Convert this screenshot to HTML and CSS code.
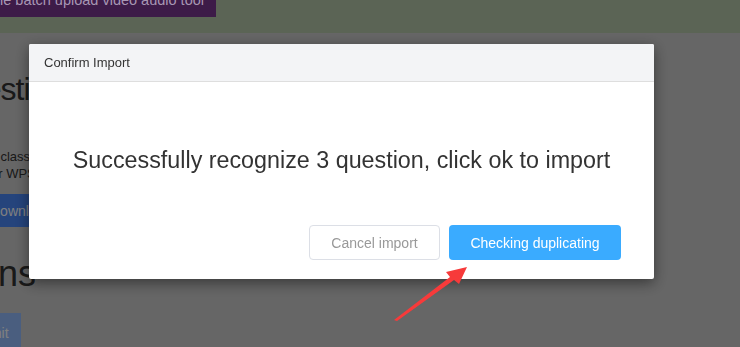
FILE: index.html
```html
<!DOCTYPE html>
<html lang="en">
<head>
  <meta charset="UTF-8">
  <title>Import Questions</title>
  <link rel="stylesheet" href="styles.css">
</head>
<body>

  <div class="topbar">
    <div class="tool-btn"><span>Simple batch upload video audio tool</span></div>
  </div>

  <div class="content">
    <h1 class="title">Questions</h1>
    <p class="hint">
      <span class="line1">Use the classic template, edit it in Word</span>
      <span class="line2">or WPS and then upload the file</span>
    </p>
    <button class="btn-download">Download template</button>
    <h2 class="subtitle">Questions</h2>
    <button class="btn-submit">Submit</button>
  </div>

  <!-- Modal -->
  <div class="overlay">
    <div class="modal">
      <div class="modal-header">Confirm Import</div>
      <div class="modal-body">Successfully recognize 3 question, click ok to import</div>
      <div class="modal-footer">
        <button class="btn-cancel">Cancel import</button>
        <button class="btn-primary">Checking duplicating</button>
      </div>
    </div>
  </div>

  <!-- annotation arrow -->
  <svg class="arrow" width="740" height="347" viewBox="0 0 740 347">
    <polygon points="394,320 450,277 446,272 467,267 459,284 454,280 397,321" fill="#f73a3a"/>
  </svg>

</body>
</html>
```

FILE: styles.css
```css
html, body {
  margin: 0;
  padding: 0;
  height: 100%;
  overflow: hidden;
  font-family: 'Liberation Sans', Arial, sans-serif;
  background: #cccccc;
}

.topbar {
  height: 33px;
  background: #5b6455;
}

.tool-btn {
  width: 216px;
  height: 17px;
  background: #3d1b48;
  color: #a897b4;
  font-family: 'Liberation Sans', Arial, sans-serif;
  font-size: 14.5px;
  line-height: 16px;
  overflow: hidden;
  white-space: nowrap;
}

.tool-btn span {
  display: block;
  margin-top: -8px;
  margin-left: -33px;
}

/* page behind the dialog */
.content {
  color: #333;
  white-space: nowrap;
}

.title {
  margin: 36px 0 0 -57px;
  font-size: 32px;
  font-weight: normal;
  line-height: 40px;
  letter-spacing: -1px;
}

.hint {
  margin: 39px 0 0 0;
  font-size: 13px;
  line-height: 17px;
}

.hint span {
  display: block;
}

.hint .line1 {
  margin-left: -48px;
}

.hint .line2 {
  margin-left: -9px;
}

.btn-download,
.btn-submit {
  display: block;
  height: 33px;
  padding: 0 12px;
  border: none;
  background: #4a88f8;
  color: #fff;
  font-family: inherit;
  font-size: 14px;
}

.btn-download {
  margin: 12px 0 0 -22px;
}

.subtitle {
  margin: 27px 0 0 -126px;
  font-size: 36px;
  font-weight: normal;
  line-height: 40px;
}

.btn-submit {
  margin: 19px 0 0 -47px;
  height: 40px;
  background: #94bcff;
}

/* dialog */
.overlay {
  position: fixed;
  left: 0;
  right: 0;
  top: 33px;
  bottom: 0;
  background: rgba(0, 0, 0, 0.5);
  padding: 11px 0 0 29px;
}

.modal {
  width: 625px;
  background: #fff;
  border-radius: 2px;
  box-shadow: 0 4px 14px rgba(0, 0, 0, 0.45);
}

.modal-header {
  height: 37px;
  line-height: 37px;
  padding-left: 15px;
  background: #f3f4f6;
  border-bottom: 1px solid #dedede;
  border-radius: 2px 2px 0 0;
  font-size: 13px;
  color: #333;
}

.modal-body {
  padding-top: 63px;
  font-size: 23.3px;
  line-height: 30px;
  text-align: center;
  color: #333;
}

.modal-footer {
  display: flex;
  justify-content: flex-end;
  gap: 9px;
  padding: 50px 33px 19px 0;
}

.modal-footer button {
  height: 35px;
  border-radius: 4px;
  font-family: inherit;
  font-size: 14px;
  cursor: pointer;
}

.btn-cancel {
  width: 131px;
  background: #fff;
  border: 1px solid #dcdfe6;
  color: #999;
}

.btn-primary {
  width: 172px;
  background: #3aabff;
  border: none;
  color: #fff;
}

.arrow {
  position: fixed;
  left: 0;
  top: 0;
  pointer-events: none;
}
```
